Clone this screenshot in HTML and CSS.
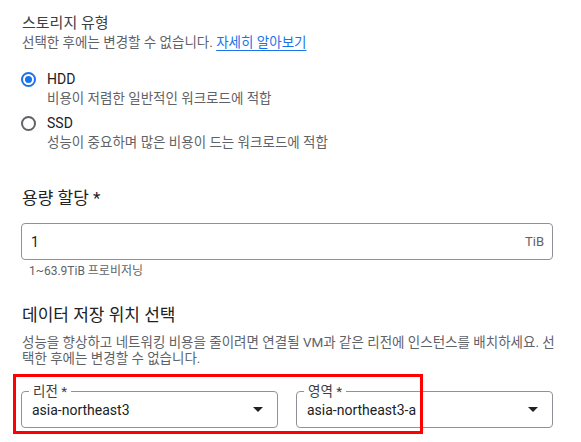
FILE: index.html
```html
<!DOCTYPE html>
<html lang="ko">
<head>
<meta charset="utf-8">
<link rel="stylesheet" href="styles.css">
</head>
<body>
<div class="page">
  <section class="storage">
    <h2 class="title-sm">스토리지 유형</h2>
    <p class="sub">선택한 후에는 변경할 수 없습니다. <a class="link" href="#">자세히 알아보기</a></p>
    <div class="radios">
      <div class="radio-item">
        <span class="radio checked"></span>
        <div class="radio-text">
          <div class="radio-label">HDD</div>
          <div class="radio-desc">비용이 저렴한 일반적인 워크로드에 적합</div>
        </div>
      </div>
      <div class="radio-item">
        <span class="radio"></span>
        <div class="radio-text">
          <div class="radio-label">SSD</div>
          <div class="radio-desc">성능이 중요하며 많은 비용이 드는 워크로드에 적합</div>
        </div>
      </div>
    </div>
  </section>

  <section class="capacity">
    <h2 class="title">용량 할당 *</h2>
    <div class="input">
      <span class="input-value">1</span>
      <span class="input-suffix">TiB</span>
    </div>
    <div class="hint">1~63.9TiB 프로비저닝</div>
  </section>

  <section class="location">
    <h2 class="title">데이터 저장 위치 선택</h2>
    <p class="desc">성능을 향상하고 네트워킹 비용을 줄이려면 연결될 VM과 같은 리전에 인스턴스를 배치하세요. 선택한 후에는 변경할 수 없습니다.</p>
    <div class="selects">
      <div class="select">
        <span class="select-label">리전 *</span>
        <span class="select-value">asia-northeast3</span>
        <span class="arrow"></span>
      </div>
      <div class="select">
        <span class="select-label">영역 *</span>
        <span class="select-value">asia-northeast3-a</span>
        <span class="arrow"></span>
      </div>
      <div class="highlight"></div>
    </div>
  </section>
</div>
</body>
</html>
```

FILE: styles.css
```css
* { box-sizing: border-box; }

html, body {
  margin: 0;
  padding: 0;
  background: #ffffff;
}

body {
  font-family: Roboto, "Noto Sans CJK KR", sans-serif;
  color: #202124;
  width: 581px;
  height: 442px;
  overflow: hidden;
}

.page {
  padding: 13px 28px 0 21px;
  word-break: break-all;
}

h2, p { margin: 0; font-weight: 400; }

.title-sm {
  font-size: 15px;
  line-height: 20px;
  color: #3c4043;
  padding-left: 1px;
}

.sub {
  font-size: 13.5px;
  line-height: 18px;
  color: #5f6368;
  padding-left: 1px;
}

.link {
  color: #1a73e8;
  text-decoration: underline;
  text-underline-offset: 3px;
}

.radios {
  display: flex;
  flex-direction: column;
  gap: 6px;
  margin-top: 18px;
}

.radio-item {
  display: flex;
  align-items: flex-start;
  gap: 11px;
}

.radio {
  width: 15px;
  height: 15px;
  border: 2px solid #5f6368;
  border-radius: 50%;
  margin-top: 3px;
  display: flex;
  align-items: center;
  justify-content: center;
  flex: none;
}

.radio.checked { border-color: #1a73e8; }
.radio.checked::after {
  content: "";
  width: 7px;
  height: 7px;
  border-radius: 50%;
  background: #1a73e8;
}

.radio-label {
  font-size: 14px;
  line-height: 20px;
  color: #202124;
}

.radio-desc {
  font-size: 13.5px;
  line-height: 18px;
  color: #5f6368;
}

.capacity { margin-top: 35px; }

.title {
  font-size: 17px;
  line-height: 24px;
  color: #202124;
  padding-left: 1px;
}

.input {
  margin-top: 13px;
  height: 37px;
  border: 1px solid #8f9398;
  border-radius: 4px;
  display: flex;
  align-items: center;
  justify-content: space-between;
  padding: 0 8px 0 9px;
}

.input-value { font-size: 14px; color: #202124; }
.input-suffix { font-size: 13px; color: #5f6368; }

.hint {
  font-size: 12px;
  line-height: 16px;
  color: #5f6368;
  padding: 3px 0 0 8px;
}

.location { margin-top: 24px; }

.desc {
  margin-top: 7px;
  margin-right: -8px;
  font-size: 13.5px;
  line-height: 16px;
  color: #5f6368;
  padding-left: 1px;
}

.selects {
  position: relative;
  display: flex;
  gap: 18px;
  margin-top: 25px;
}

.select {
  position: relative;
  flex: 1;
  height: 37px;
  border: 1px solid #8f9398;
  border-radius: 4px;
  display: flex;
  align-items: center;
  padding: 0 14px 0 10px;
}

.select-label {
  position: absolute;
  top: -9px;
  left: 7px;
  padding: 0 4px;
  background: #ffffff;
  font-size: 13.5px;
  line-height: 16px;
  color: #3c4043;
}

.select-value {
  flex: 1;
  font-size: 14px;
  color: #202124;
}

.arrow {
  width: 0;
  height: 0;
  border-left: 5px solid transparent;
  border-right: 5px solid transparent;
  border-top: 5px solid #202124;
}

.highlight {
  position: absolute;
  left: -8px;
  top: -17px;
  width: 410px;
  height: 60px;
  border: 3px solid #ff0000;
  pointer-events: none;
}
```
